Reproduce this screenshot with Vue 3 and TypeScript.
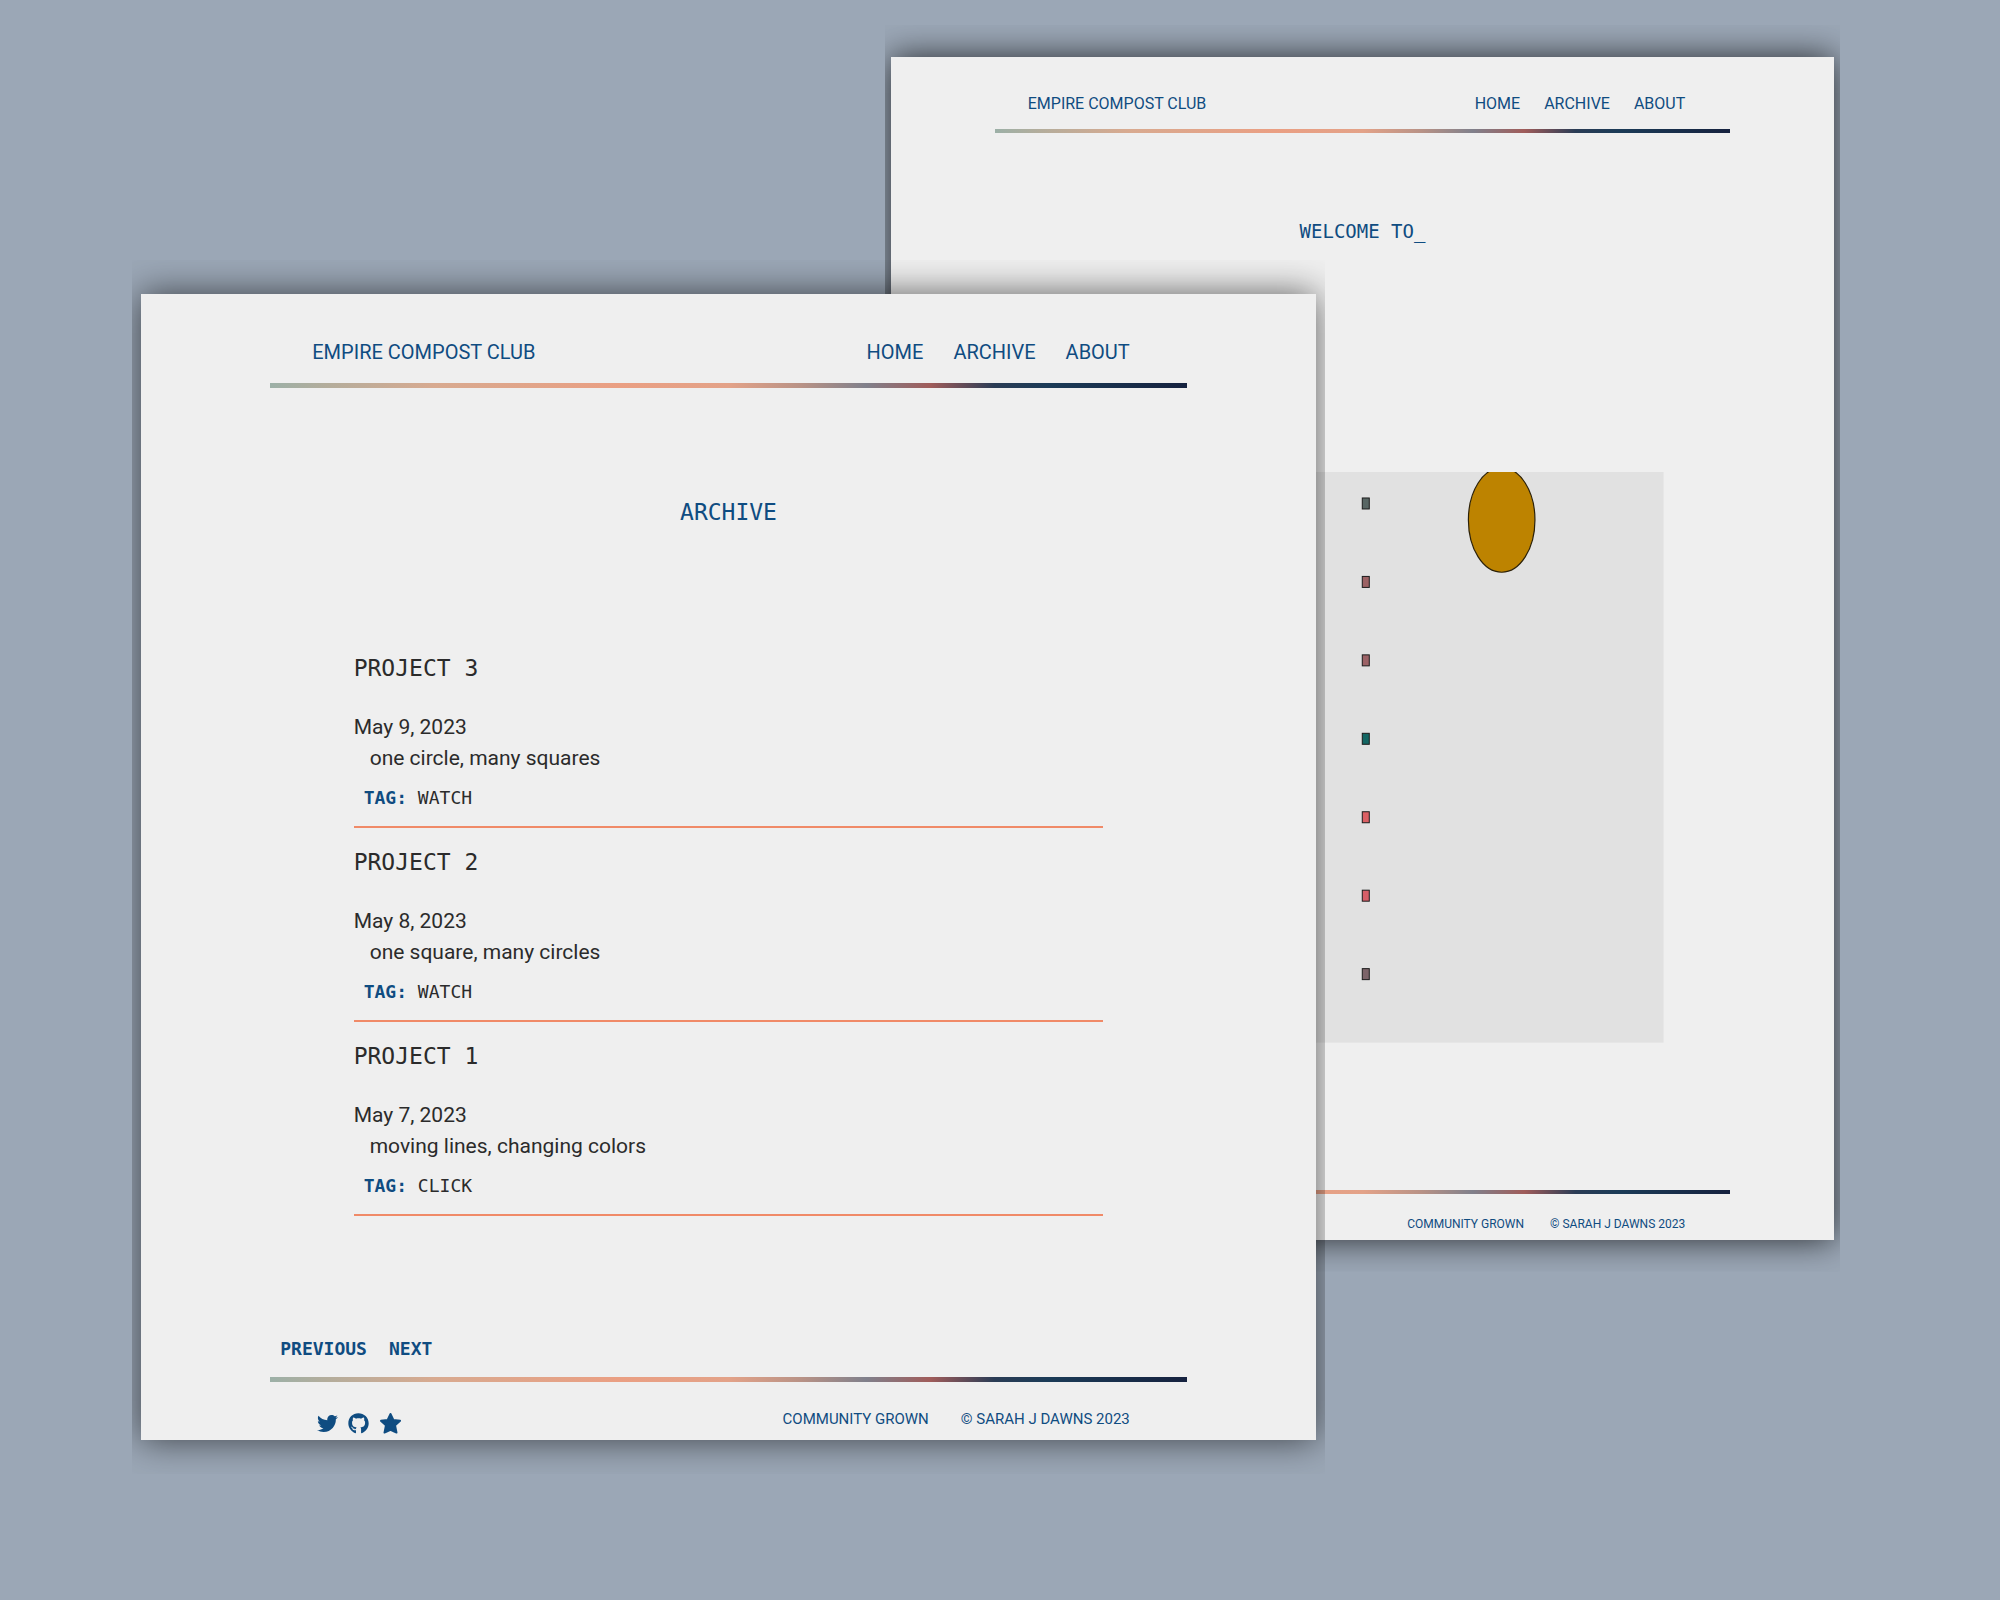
<script setup lang="ts">
interface Entry {
  title: string
  date: string
  description: string
  tag: string
}

const links: string[] = ['HOME', 'ARCHIVE', 'ABOUT']
const notes: string[] = ['COMMUNITY GROWN', '© SARAH J DAWNS 2023']

const entries: Entry[] = [
  { title: 'PROJECT 3', date: 'May 9, 2023', description: 'one circle, many squares', tag: 'WATCH' },
  { title: 'PROJECT 2', date: 'May 8, 2023', description: 'one square, many circles', tag: 'WATCH' },
  { title: 'PROJECT 1', date: 'May 7, 2023', description: 'moving lines, changing colors', tag: 'CLICK' },
]

const squareColors: string[] = ['#586664', '#9c6264', '#9c6266', '#136663', '#db6064', '#d65f68', '#7c6469']
const squares = squareColors.map((color, i) => ({ color, y: 26 + i * 78.5 }))
</script>

<template>
  <div class="desktop">
    <section class="sheet home">
      <header class="bar top">
        <a class="brand" href="#">EMPIRE COMPOST CLUB</a>
        <nav class="links">
          <a v-for="link in links" :key="link" href="#">{{ link }}</a>
        </nav>
      </header>
      <div class="rail"></div>
      <h1 class="heading">WELCOME TO_</h1>
      <svg class="sketch" viewBox="0 0 603 571" role="img" aria-label="Animated sketch">
        <rect width="603" height="571" fill="#e1e1e1" />
        <rect
          v-for="s in squares"
          :key="s.y"
          x="301.5"
          :y="s.y"
          width="7"
          height="11"
          :fill="s.color"
          stroke="#1c1c1c"
        />
        <ellipse cx="441" cy="48" rx="33.3" ry="52.3" fill="#bd8300" stroke="#2c2108" stroke-width="1.2" />
      </svg>
      <div class="rail"></div>
      <footer class="bar bottom">
        <div class="notes">
          <a v-for="note in notes" :key="note" href="#">{{ note }}</a>
        </div>
      </footer>
    </section>

    <section class="sheet archive">
      <header class="bar top">
        <a class="brand" href="#">EMPIRE COMPOST CLUB</a>
        <nav class="links">
          <a v-for="link in links" :key="link" href="#">{{ link }}</a>
        </nav>
      </header>
      <div class="rail"></div>
      <h1 class="heading">ARCHIVE</h1>
      <ul class="entries">
        <li v-for="entry in entries" :key="entry.title" class="entry">
          <h2 class="title">{{ entry.title }}</h2>
          <p class="date">{{ entry.date }}</p>
          <p class="description">{{ entry.description }}</p>
          <p class="tag"><b>TAG:</b> {{ entry.tag }}</p>
        </li>
      </ul>
      <nav class="pager">
        <a href="#">PREVIOUS</a>
        <a href="#">NEXT</a>
      </nav>
      <div class="rail"></div>
      <footer class="bar bottom">
        <div class="social">
          <a href="#" aria-label="Twitter">
            <svg viewBox="0 0 512 512"><path d="M459.37 151.716c.325 4.548.325 9.097.325 13.645 0 138.72-105.583 298.558-298.558 298.558-59.452 0-114.68-17.219-161.137-47.106 8.447.974 16.568 1.299 25.34 1.299 49.055 0 94.213-16.568 130.274-44.832-46.132-.975-84.792-31.188-98.112-72.772 6.498.974 12.995 1.624 19.818 1.624 9.421 0 18.843-1.3 27.614-3.573-48.081-9.747-84.143-51.98-84.143-102.985v-1.299c13.969 7.797 30.214 12.67 47.431 13.319-28.264-18.843-46.781-51.005-46.781-87.391 0-19.492 5.197-37.36 14.294-52.954 51.655 63.675 129.3 105.258 216.365 109.807-1.624-7.797-2.599-15.918-2.599-24.04 0-57.828 46.782-104.934 104.934-104.934 30.213 0 57.502 12.67 76.67 33.137 23.715-4.548 46.456-13.32 66.599-25.34-7.798 24.366-24.366 44.833-46.132 57.827 21.117-2.273 41.584-8.122 60.426-16.243-14.292 20.791-32.161 39.308-52.628 54.253z" /></svg>
          </a>
          <a href="#" aria-label="GitHub">
            <svg viewBox="0 0 496 512"><path d="M165.9 397.4c0 2-2.3 3.6-5.2 3.6-3.3.3-5.6-1.3-5.6-3.6 0-2 2.3-3.6 5.2-3.6 3-.3 5.6 1.3 5.6 3.6zm-31.1-4.5c-.7 2 1.3 4.3 4.3 4.9 2.6 1 5.6 0 6.2-2s-1.3-4.3-4.3-5.2c-2.6-.7-5.5.3-6.2 2.3zm44.2-1.7c-2.9.7-4.9 2.6-4.6 4.9.3 2 2.9 3.3 5.9 2.6 2.9-.7 4.9-2.6 4.6-4.6-.3-1.9-3-3.2-5.9-2.9zM244.8 8C106.1 8 0 113.3 0 252c0 110.9 69.8 205.8 169.5 239.2 12.8 2.3 17.3-5.6 17.3-12.1 0-6.2-.3-40.4-.3-61.4 0 0-70 15-84.7-29.8 0 0-11.4-29.1-27.8-36.6 0 0-22.9-15.7 1.6-15.4 0 0 24.9 2 38.6 25.8 21.9 38.6 58.6 27.5 72.9 20.9 2.3-16 8.8-27.1 16-33.7-55.9-6.2-112.3-14.3-112.3-110.5 0-27.5 7.6-41.3 23.6-58.9-2.6-6.5-11.1-33.3 2.6-67.9 20.9-6.5 69 27 69 27 20-5.6 41.5-8.5 62.8-8.5s42.8 2.9 62.8 8.5c0 0 48.1-33.6 69-27 13.7 34.7 5.2 61.4 2.6 67.9 16 17.7 25.8 31.5 25.8 58.9 0 96.5-58.9 104.2-114.8 110.5 9.2 7.9 17 22.9 17 46.4 0 33.7-.3 75.4-.3 83.6 0 6.5 4.6 14.4 17.3 12.1C428.2 457.8 496 362.9 496 252 496 113.3 383.5 8 244.8 8zM97.2 352.9c-1.3 1-1 3.3.7 5.2 1.6 1.6 3.9 2.3 5.2 1 1.3-1 1-3.3-.7-5.2-1.6-1.6-3.9-2.3-5.2-1zm-10.8-8.1c-.7 1.3.3 2.9 2.3 3.9 1.6 1 3.6.7 4.3-.7.7-1.3-.3-2.9-2.3-3.9-2-.6-3.6-.3-4.3.7zm32.4 35.6c-1.6 1.3-1 4.3 1.3 6.2 2.3 2.3 5.2 2.6 6.5 1 1.3-1.3.7-4.3-1.3-6.2-2.2-2.3-5.2-2.6-6.5-1zm-11.4-14.7c-1.6 1-1.6 3.6 0 5.9 1.6 2.3 4.3 3.3 5.6 2.3 1.6-1.3 1.6-3.9 0-6.2-1.4-2.3-4-3.3-5.6-2z" /></svg>
          </a>
          <a href="#" aria-label="Favourites">
            <svg class="star" viewBox="0 0 24 24"><path d="M12 2l3 6.300 7 .9-5.200 4.800 1.500 7.500L12 18.600l-6.300 2.900 1.500-7.500L2 9.200l7-.9z" /></svg>
          </a>
        </div>
        <div class="notes">
          <a v-for="note in notes" :key="note" href="#">{{ note }}</a>
        </div>
      </footer>
    </section>
  </div>
</template>

<style>
body {
  margin: 0;
  background: #9ba7b6;
}
</style>

<style scoped>
.desktop {
  position: relative;
  min-height: 100vh;
  background: #9ba7b6;
  color: #2b2b2b;
  font-family: Roboto, "Liberation Sans", sans-serif;
}

a {
  color: #0f4c81;
  text-decoration: none;
}

h1,
h2,
p,
ul {
  margin: 0;
  padding: 0;
  font-weight: 400;
}

.sheet {
  position: absolute;
  display: flex;
  flex-direction: column;
  align-items: center;
  background: #efefef;
}

.rail {
  width: 78%;
  height: 5px;
  background: linear-gradient(
    90deg,
    #9cb0a7 0%,
    #b3ad9c 6%,
    #d8aa90 18%,
    #ea9f83 38%,
    #e3a288 50%,
    #b89286 58%,
    #80808b 65%,
    #a05c5a 72%,
    #2a3c55 79%,
    #1b3b57 85%,
    #16223f 100%
  );
}

.bar {
  box-sizing: border-box;
  width: 78%;
  display: flex;
  justify-content: space-between;
}

.links,
.notes {
  display: flex;
}

.heading {
  color: #0f4c81;
  font-family: "DejaVu Sans Mono", monospace;
}

/* Archive sheet, in front */
.archive {
  top: 294px;
  left: 7.05%;
  width: 58.75%;
  box-shadow: 0 0 34px rgba(0, 0, 0, 0.62);
  clip-path: inset(-34px -9px);
}

.archive .bar {
  padding: 0 57px 0 42px;
}

.archive .top {
  padding-top: 46px;
  margin-bottom: 19px;
  font-size: 20px;
  line-height: 24px;
}

.archive .links {
  gap: 30px;
}

.archive .heading {
  margin: 110px 0 128px;
  font-size: 23px;
  line-height: 28px;
}

.entries {
  width: 63.8%;
  list-style: none;
}

.entry {
  padding-bottom: 16px;
  border-bottom: 2px solid #f08a68;
}

.entry + .entry {
  margin-top: 20px;
}

.title {
  margin-bottom: 30px;
  font-family: "DejaVu Sans Mono", monospace;
  font-size: 23px;
  line-height: 28px;
}

.date,
.description {
  font-size: 21px;
  line-height: 31px;
}

.description {
  padding-left: 16px;
}

.tag {
  margin-top: 12px;
  padding-left: 10px;
  font-family: "DejaVu Sans Mono", monospace;
  font-size: 18px;
  line-height: 24px;
}

.tag b {
  color: #0f4c81;
}

.pager {
  box-sizing: border-box;
  width: 78%;
  display: flex;
  gap: 22px;
  margin: 121px 0 16px;
  padding-left: 10px;
  font-family: "DejaVu Sans Mono", monospace;
  font-size: 18px;
  font-weight: 700;
  line-height: 24px;
}

.archive .bottom {
  padding-top: 26px;
  padding-bottom: 2px;
}

.social {
  display: flex;
  align-items: center;
  gap: 10px;
  height: 30px;
  padding-left: 5px;
}

.social a {
  display: flex;
}

.social svg {
  width: 21px;
  height: 21px;
  fill: #0f4c81;
}

.social .star {
  width: 23px;
  height: 23px;
  stroke: #0f4c81;
  stroke-width: 2;
  stroke-linejoin: round;
}

.archive .notes {
  gap: 32px;
  font-size: 15px;
  line-height: 22px;
}

/* Home sheet, behind */
.home {
  top: 57px;
  left: 44.55%;
  width: 47.15%;
  box-shadow: 0 0 32px rgba(0, 0, 0, 0.75);
  clip-path: inset(-32px -6px);
}

.home .rail {
  height: 4px;
}

.home .bar {
  padding: 0 45px 0 33px;
}

.home .top {
  padding-top: 37px;
  margin-bottom: 15px;
  font-size: 16px;
  line-height: 20px;
}

.home .links {
  gap: 24px;
}

.home .heading {
  margin: 86px 0 229px;
  font-size: 19px;
  line-height: 24px;
}

.sketch {
  display: block;
  width: 63.9%;
  margin-bottom: 147px;
}

.home .bottom {
  justify-content: flex-end;
  padding-top: 21px;
  padding-bottom: 7px;
}

.home .notes {
  gap: 26px;
  font-size: 12px;
  line-height: 18px;
}
</style>
